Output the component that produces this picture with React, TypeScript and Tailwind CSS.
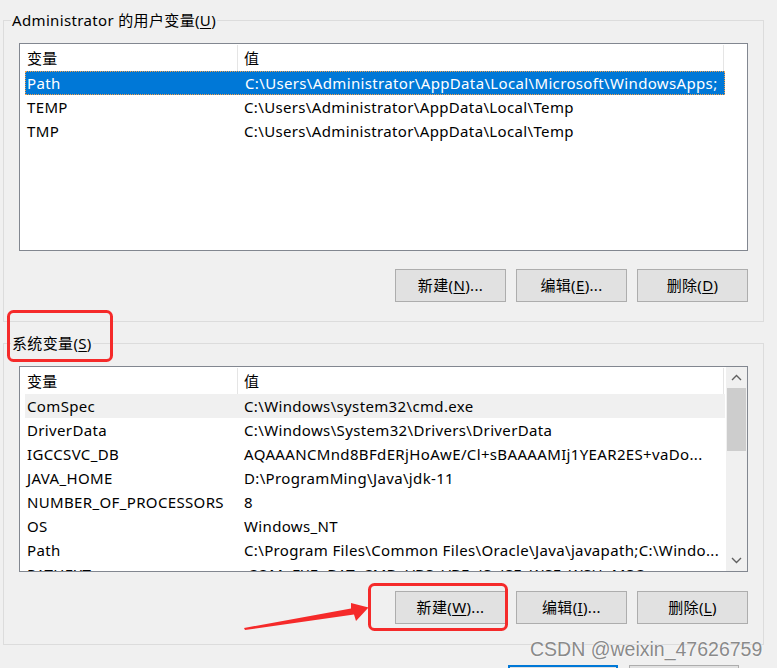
import React from "react";

type Row = { name: string; value: string };

const USER_VARS: Row[] = [
  { name: "Path", value: "C:\\Users\\Administrator\\AppData\\Local\\Microsoft\\WindowsApps;" },
  { name: "TEMP", value: "C:\\Users\\Administrator\\AppData\\Local\\Temp" },
  { name: "TMP", value: "C:\\Users\\Administrator\\AppData\\Local\\Temp" },
];

const SYSTEM_VARS: Row[] = [
  { name: "ComSpec", value: "C:\\Windows\\system32\\cmd.exe" },
  { name: "DriverData", value: "C:\\Windows\\System32\\Drivers\\DriverData" },
  { name: "IGCCSVC_DB", value: "AQAAANCMnd8BFdERjHoAwE/Cl+sBAAAAMIj1YEAR2ES+vaDo..." },
  { name: "JAVA_HOME", value: "D:\\ProgramMing\\Java\\jdk-11" },
  { name: "NUMBER_OF_PROCESSORS", value: "8" },
  { name: "OS", value: "Windows_NT" },
  { name: "Path", value: "C:\\Program Files\\Common Files\\Oracle\\Java\\javapath;C:\\Windo..." },
  { name: "PATHEXT", value: ".COM;.EXE;.BAT;.CMD;.VBS;.VBE;.JS;.JSE;.WSF;.WSH;.MSC" },
];

function Mnemonic({ before, letter, after }: { before: string; letter: string; after: string }) {
  return (
    <>
      {before}(<u className="underline-offset-2">{letter}</u>){after}
    </>
  );
}

function WinButton({ label, letter, dots }: { label: string; letter: string; dots?: boolean }) {
  return (
    <button className="flex h-[33px] w-[111px] items-center justify-center border border-[#adadad] bg-[#e1e1e1] text-[15px] text-black">
      <Mnemonic before={label} letter={letter} after={dots ? "..." : ""} />
    </button>
  );
}

function Header() {
  return (
    <div className="flex h-[27px] shrink-0 items-center pt-[1px]">
      <div className="flex h-full w-[218px] items-center border-r border-[#e5e5e5] pl-[7px]">变量</div>
      <div className="flex h-full w-[486px] items-center border-r border-[#e5e5e5] pl-[6px]">值</div>
    </div>
  );
}

function ListRow({ row, state }: { row: Row; state?: "focus" | "soft" }) {
  const tone =
    state === "focus"
      ? "bg-[#0078d7] text-white border border-dotted border-[#f3a04a]"
      : state === "soft"
        ? "bg-[#f0f0f0]"
        : "";
  return (
    <div className={"ml-[5px] flex h-[24px] w-[700px] shrink-0 items-center whitespace-nowrap " + tone}>
      <div className={state === "focus" ? "w-[219px] pl-[1px]" : "w-[219px] pl-[2px]"}>{row.name}</div>
      <div>{row.value}</div>
    </div>
  );
}

function Chevron({ up }: { up?: boolean }) {
  return (
    <svg width="11" height="7" viewBox="0 0 11 7" className="text-[#606060]">
      <path
        d={up ? "M1 6 L5.5 1.5 L10 6" : "M1 1 L5.5 5.5 L10 1"}
        fill="none"
        stroke="currentColor"
        strokeWidth="1.4"
      />
    </svg>
  );
}

function GroupBox({
  title,
  children,
  className,
}: {
  title: React.ReactNode;
  children: React.ReactNode;
  className: string;
}) {
  return (
    <fieldset className={"ml-[3px] w-[761px] border border-[#dcdcdc] " + className}>
      <legend className="ml-[7px] px-[1px] leading-[20px]">{title}</legend>
      {children}
    </fieldset>
  );
}

export default function App() {
  return (
    <div className="relative h-[668px] w-[777px] overflow-hidden bg-[#f0f0f0] font-['Noto_Sans','Noto_Sans_CJK_SC',sans-serif] text-[15px] tracking-[0.35px] text-black">
      <GroupBox title={<Mnemonic before="Administrator 的用户变量" letter="U" after="" />} className="mt-[10px]">
        <div className="px-[15px] pb-[19px] pt-[13px]">
          <div className="flex h-[208px] flex-col overflow-hidden border border-[#828790] bg-white">
            <Header />
            {USER_VARS.map((r, i) => (
              <ListRow key={r.name} row={r} state={i === 0 ? "focus" : undefined} />
            ))}
          </div>
          <div className="mt-[18px] flex justify-end gap-[10px]">
            <WinButton label="新建" letter="N" dots />
            <WinButton label="编辑" letter="E" dots />
            <WinButton label="删除" letter="D" />
          </div>
        </div>
      </GroupBox>

      <GroupBox title={<Mnemonic before="系统变量" letter="S" after="" />} className="mt-[11px]">
        <div className="px-[15px] pb-[20px] pt-[13px]">
          <div className="flex h-[206px] overflow-hidden border border-[#828790] bg-white">
            <div className="flex min-w-0 flex-1 flex-col overflow-hidden">
              <Header />
              {SYSTEM_VARS.map((r, i) => (
                <ListRow key={r.name + i} row={r} state={i === 0 ? "soft" : undefined} />
              ))}
            </div>
            <div className="flex w-[21px] shrink-0 flex-col bg-[#f0f0f0]">
              <div className="flex h-[21px] items-center justify-center">
                <Chevron up />
              </div>
              <div className="mx-[1px] h-[63px] bg-[#cdcdcd]" />
              <div className="flex-1" />
              <div className="flex h-[21px] items-center justify-center">
                <Chevron />
              </div>
            </div>
          </div>
          <div className="mt-[19px] flex justify-end gap-[10px]">
            <WinButton label="新建" letter="W" dots />
            <WinButton label="编辑" letter="I" dots />
            <WinButton label="删除" letter="L" />
          </div>
        </div>
      </GroupBox>

      <div className="mt-[20px] flex justify-end gap-[11px] pr-[38px]">
        <div className="h-[33px] w-[110px] border-2 border-[#0078d7] bg-[#e1e1e1]" />
        <div className="h-[33px] w-[110px] border border-[#adadad] bg-[#e1e1e1]" />
      </div>

      {/* annotations drawn over the screenshot */}
      <svg className="pointer-events-none absolute left-0 top-0" width="777" height="668" viewBox="0 0 777 668">
        <rect x="8.5" y="311.5" width="103" height="49" rx="5" fill="none" stroke="#f52a2a" strokeWidth="3" />
        <rect x="369.5" y="584.5" width="137" height="45" rx="5" fill="none" stroke="#f52a2a" strokeWidth="3" />
        <polygon points="244,628 351,608.5 351,603 368.5,607.5 356,621 354,614.5 245,630" fill="#f52a2a" />
      </svg>

      <div className="pointer-events-none absolute left-[530px] top-[638px] font-['Liberation_Sans',sans-serif] text-[19.5px] leading-[22px] tracking-normal text-[#8a8a8a] [text-shadow:0_0_2px_#ffffff,0_0_1px_#ffffff]">
        CSDN @weixin_47626759
      </div>
    </div>
  );
}
